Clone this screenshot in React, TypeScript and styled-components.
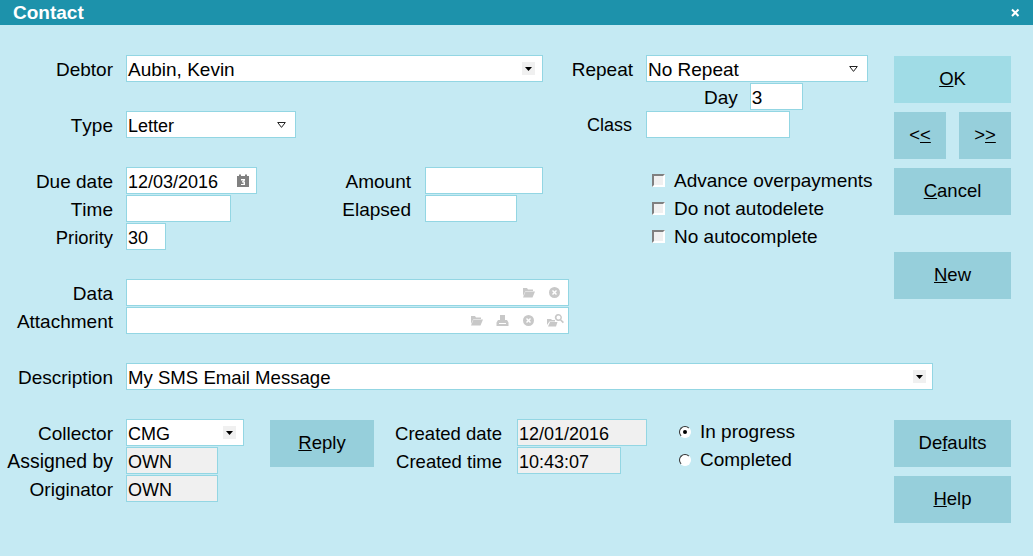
import React from "react";
import styled, { createGlobalStyle } from "styled-components";

const GlobalStyle = createGlobalStyle`
  html, body {
    margin: 0;
    padding: 0;
    background: #c5eaf3;
  }
  body {
    font-family: "Liberation Sans", Arial, sans-serif;
    font-size: 19px;
    font-kerning: none;
    color: #000;
  }
`;

const Window = styled.div`
  width: 1033px;
  height: 556px;
  overflow: hidden;
  background: #c5eaf3;
`;

const TitleBar = styled.div`
  height: 25px;
  background: #1d92ab;
  color: #fff;
  font-weight: bold;
  display: flex;
  align-items: center;
  justify-content: space-between;
  padding: 0 13px;
  box-sizing: border-box;
`;

const Content = styled.div`
  padding: 30px 22px 0 0;
  display: flex;
  flex-direction: column;
  gap: 28px;
`;

const TopBand = styled.div`
  display: flex;
  gap: 9px;
`;

const FormGrid = styled.div`
  width: 885px;
  display: grid;
  grid-template-columns: 126px 299px 118px 103px 1fr;
  grid-auto-rows: 28px;
`;

const Cell = styled.div<{ $col: string; $row: string }>`
  grid-column: ${(p) => p.$col};
  grid-row: ${(p) => p.$row};
  min-width: 0;
`;

const Label = styled.div<{ $col?: string; $row?: string; $pad?: number; $size?: number }>`
  grid-column: ${(p) => p.$col || "auto"};
  grid-row: ${(p) => p.$row || "auto"};
  height: 27px;
  font-size: ${(p) => p.$size ?? 19}px;
  line-height: 29px;
  text-align: right;
  padding-right: ${(p) => p.$pad ?? 13}px;
  white-space: nowrap;
`;

const FieldText = styled.span`
  flex: 1;
  padding-top: 2px;
  line-height: 23px;
`;

const Field = styled.div<{ $w: number; $readOnly?: boolean; $size?: number }>`
  width: ${(p) => p.$w}px;
  height: 27px;
  box-sizing: border-box;
  border: 1px solid #93d6e3;
  background: ${(p) => (p.$readOnly ? "#f0f0f0" : "#fff")};
  padding: 0 1px;
  display: flex;
  align-items: center;
  font-size: ${(p) => p.$size ?? 19}px;
  line-height: 25px;
  white-space: nowrap;

  ${FieldText} {
    padding-top: ${(p) => (p.$size === 18 ? 4 : 2)}px;
  }
`;

const DayRow = styled.div`
  display: flex;
  align-items: center;
  padding-left: 58px;
  gap: 12px;
`;

const DayLabel = styled.span`
  padding-top: 2px;
`;

const ArrowBox = styled.span<{ $margin: number }>`
  width: 13px;
  height: 13px;
  background: #f0f0f0;
  display: flex;
  align-items: center;
  justify-content: center;
  margin-right: ${(p) => p.$margin}px;
`;

const OutlineArrow = styled.svg<{ $margin: number }>`
  width: 9px;
  height: 6px;
  margin-right: ${(p) => p.$margin}px;
`;

const IconRow = styled.span`
  display: flex;
  align-items: center;
`;

const FieldIcon = styled.svg<{ $margin: number; $w?: number }>`
  width: ${(p) => p.$w ?? 13}px;
  height: 13px;
  margin-right: ${(p) => p.$margin}px;
  fill: #c8c8c8;
`;

const CheckRow = styled.div`
  display: flex;
  align-items: center;
  height: 27px;
  padding-left: 6px;
  gap: 9px;
  white-space: nowrap;
`;

const CheckBox = styled.span`
  width: 13px;
  height: 13px;
  box-sizing: border-box;
  background: #f0f0f0;
  border: 2px solid;
  border-color: #808080 #fff #fff #808080;
`;

const ButtonColumn = styled.div`
  width: 117px;
  display: flex;
  flex-direction: column;
  gap: 9px;
  padding-top: 1px;
`;

const Button = styled.button<{ $w?: number; $tone?: string }>`
  width: ${(p) => (p.$w ? `${p.$w}px` : "100%")};
  height: 47px;
  border: 0;
  padding: 0 0 2px;
  background: ${(p) => p.$tone || "#96cfdb"};
  color: #000;
  font-family: inherit;
  font-size: 18.5px;
`;

const ButtonPair = styled.div`
  display: flex;
  justify-content: space-between;
`;

const NewButton = styled(Button)`
  margin-top: 28px;
`;

const DescriptionRow = styled.div`
  display: flex;
  height: 28px;
`;

const DescriptionLabel = styled(Label)`
  width: 126px;
  box-sizing: border-box;
`;

const BottomGrid = styled.div`
  display: grid;
  grid-template-columns: 126px 144px 104px 143px 162px 215px 117px;
  grid-auto-rows: 28px;
`;

const GridButton = styled(Button)<{ $col: string; $row: string }>`
  grid-column: ${(p) => p.$col};
  grid-row: ${(p) => p.$row};
  margin-top: 1px;
`;

const RadioRow = styled.div`
  display: flex;
  align-items: center;
  height: 27px;
  margin-top: -1px;
  gap: 9px;
  white-space: nowrap;
`;

const Radio = styled.span<{ $on?: boolean }>`
  width: 12px;
  height: 12px;
  box-sizing: border-box;
  border-radius: 50%;
  background: #fff;
  border: 1.5px solid;
  border-color: #303030 #fff #fff #303030;
  display: flex;
  align-items: center;
  justify-content: center;
  &::after {
    content: "";
    width: 4px;
    height: 4px;
    border-radius: 50%;
    background: ${(p) => (p.$on ? "#000" : "transparent")};
  }
`;

const FilledArrow = ({ margin }: { margin: number }) => (
  <ArrowBox $margin={margin}>
    <svg width="7" height="4" viewBox="0 0 7 4">
      <path d="M0 0h7L3.5 4z" fill="#000" />
    </svg>
  </ArrowBox>
);

const HollowArrow = ({ margin }: { margin: number }) => (
  <OutlineArrow $margin={margin} viewBox="0 0 9 6">
    <path d="M.7.5h7.6L4.500 5.400z" fill="none" stroke="#222" strokeWidth="1" />
  </OutlineArrow>
);

const FolderIcon = ({ margin }: { margin: number }) => (
  <FieldIcon $margin={margin} viewBox="0 0 13 13">
    <path d="M1 2h4l1 1.500h5V5H3.500L1 10zM3.500 5.500H13l-2.500 6H1z" />
  </FieldIcon>
);

const ClearIcon = ({ margin }: { margin: number }) => (
  <FieldIcon $margin={margin} viewBox="0 0 13 13">
    <path
      fillRule="evenodd"
      d="M6.500 1a5.500 5.500 0 1 1 0 11 5.500 5.500 0 0 1 0-11zM5 4 4 5l1.500 1.500L4 8l1 1 1.500-1.500L8 9l1-1-1.500-1.500L9 5 8 4 6.500 5.500z"
    />
  </FieldIcon>
);

const PrinterIcon = ({ margin }: { margin: number }) => (
  <FieldIcon $margin={margin} viewBox="0 0 13 13">
    <path d="M4 1h5v5h2l1.500 2.500V12H.5V8.500L2 6h2zM3 9v1h7V9z" fillRule="evenodd" />
  </FieldIcon>
);

const FolderSearchIcon = ({ margin }: { margin: number }) => (
  <FieldIcon $margin={margin} $w={17} viewBox="0 0 17 13">
    <path d="M0 5h4l1 1h3v1.500H2.500L0 11zM3 8h7.500L9 12.500H1z" />
    <path
      fillRule="evenodd"
      d="M11.500 0a3.500 3.500 0 0 1 2.800 5.400L17 8l-1.200 1.200-2.700-2.700A3.500 3.500 0 1 1 11.500 0zm0 1.500a2 2 0 1 0 0 4 2 2 0 0 0 0-4z"
    />
  </FieldIcon>
);

const CalendarIcon = () => (
  <svg width="12" height="13" viewBox="0 0 12 13" style={{ marginRight: 6 }}>
    <path d="M0 2h2V.5h2V2h4V.5h2V2h2v11H0z" fill="#808080" />
    <path d="M4 5h4v1.500L6.500 7.500H8V11H4v-1h2.500V8.500H5v-1l1.500-1H4z" fill="#fff" />
  </svg>
);

const App = () => {
  return (
    <Window>
      <GlobalStyle />
      <TitleBar>
        <span>Contact</span>
        <svg width="9" height="9" viewBox="0 0 9 9">
          <path d="M1 1.500 7.500 8M7.500 1.500 1 8" stroke="#fff" strokeWidth="2" />
        </svg>
      </TitleBar>
      <Content>
        <TopBand>
          <FormGrid>
            <Label $col="1" $row="1">Debtor</Label>
            <Cell $col="2 / 4" $row="1">
              <Field $w={417}>
                <FieldText>Aubin, Kevin</FieldText>
                <FilledArrow margin={6} />
              </Field>
            </Cell>
            <Label $col="4" $row="1">Repeat</Label>
            <Cell $col="5" $row="1">
              <Field $w={222}>
                <FieldText>No Repeat</FieldText>
                <HollowArrow margin={8} />
              </Field>
            </Cell>

            <Cell $col="5" $row="2">
              <DayRow>
                <DayLabel>Day</DayLabel>
                <Field $w={53}><FieldText>3</FieldText></Field>
              </DayRow>
            </Cell>

            <Label $col="1" $row="3">Type</Label>
            <Cell $col="2" $row="3">
              <Field $w={170} $size={18}>
                <FieldText>Letter</FieldText>
                <HollowArrow margin={8} />
              </Field>
            </Cell>
            <Label $col="4" $row="3" $pad={14} $size={18}>Class</Label>
            <Cell $col="5" $row="3">
              <Field $w={144} />
            </Cell>

            <Label $col="1" $row="5">Due date</Label>
            <Cell $col="2" $row="5">
              <Field $w={131} $size={18}>
                <FieldText>12/03/2016</FieldText>
                <CalendarIcon />
              </Field>
            </Cell>
            <Label $col="2" $row="5" $pad={14}>Amount</Label>
            <Cell $col="3" $row="5">
              <Field $w={118} />
            </Cell>
            <Cell $col="5" $row="5">
              <CheckRow>
                <CheckBox />
                Advance overpayments
              </CheckRow>
            </Cell>

            <Label $col="1" $row="6">Time</Label>
            <Cell $col="2" $row="6">
              <Field $w={105} />
            </Cell>
            <Label $col="2" $row="6" $pad={14}>Elapsed</Label>
            <Cell $col="3" $row="6">
              <Field $w={92} />
            </Cell>
            <Cell $col="5" $row="6">
              <CheckRow>
                <CheckBox />
                Do not autodelete
              </CheckRow>
            </Cell>

            <Label $col="1" $row="7" $size={18.4}>Priority</Label>
            <Cell $col="2" $row="7">
              <Field $w={40} $size={18}><FieldText>30</FieldText></Field>
            </Cell>
            <Cell $col="5" $row="7">
              <CheckRow>
                <CheckBox />
                No autocomplete
              </CheckRow>
            </Cell>

            <Label $col="1" $row="9">Data</Label>
            <Cell $col="2 / 5" $row="9">
              <Field $w={443}>
                <FieldText />
                <IconRow>
                  <FolderIcon margin={13} />
                  <ClearIcon margin={6} />
                </IconRow>
              </Field>
            </Cell>

            <Label $col="1" $row="10">Attachment</Label>
            <Cell $col="2 / 5" $row="10">
              <Field $w={443}>
                <FieldText />
                <IconRow>
                  <FolderIcon margin={13} />
                  <PrinterIcon margin={13} />
                  <ClearIcon margin={12} />
                  <FolderSearchIcon margin={3} />
                </IconRow>
              </Field>
            </Cell>
          </FormGrid>

          <ButtonColumn>
            <Button $tone="#a0dce6"><u>O</u>K</Button>
            <ButtonPair>
              <Button $w={52}>&lt;<u>&lt;</u></Button>
              <Button $w={52}>&gt;<u>&gt;</u></Button>
            </ButtonPair>
            <Button><u>C</u>ancel</Button>
            <NewButton><u>N</u>ew</NewButton>
          </ButtonColumn>
        </TopBand>

        <DescriptionRow>
          <DescriptionLabel>Description</DescriptionLabel>
          <Field $w={807} $size={18.6}>
            <FieldText>My SMS Email Message</FieldText>
            <FilledArrow margin={5} />
          </Field>
        </DescriptionRow>

        <BottomGrid>
          <Label $col="1" $row="1">Collector</Label>
          <Cell $col="2" $row="1">
            <Field $w={118} $size={18}>
              <FieldText>CMG</FieldText>
              <FilledArrow margin={6} />
            </Field>
          </Cell>
          <Label $col="1" $row="2" $size={19.4}>Assigned by</Label>
          <Cell $col="2" $row="2">
            <Field $w={92} $size={18} $readOnly><FieldText>OWN</FieldText></Field>
          </Cell>
          <Label $col="1" $row="3">Originator</Label>
          <Cell $col="2" $row="3">
            <Field $w={92} $size={18} $readOnly><FieldText>OWN</FieldText></Field>
          </Cell>

          <GridButton $col="3" $row="1 / 3"><u>R</u>eply</GridButton>

          <Label $col="4" $row="1" $pad={15} $size={18.5}>Created date</Label>
          <Cell $col="5" $row="1">
            <Field $w={130} $size={18} $readOnly><FieldText>12/01/2016</FieldText></Field>
          </Cell>
          <Label $col="4" $row="2" $pad={15} $size={18.5}>Created time</Label>
          <Cell $col="5" $row="2">
            <Field $w={104} $size={18} $readOnly><FieldText>10:43:07</FieldText></Field>
          </Cell>

          <Cell $col="6" $row="1">
            <RadioRow>
              <Radio $on />
              In progress
            </RadioRow>
          </Cell>
          <Cell $col="6" $row="2">
            <RadioRow>
              <Radio />
              Completed
            </RadioRow>
          </Cell>

          <GridButton $col="7" $row="1 / 3">De<u>f</u>aults</GridButton>
          <GridButton $col="7" $row="3 / 5"><u>H</u>elp</GridButton>
        </BottomGrid>
      </Content>
    </Window>
  );
};

export default App;
